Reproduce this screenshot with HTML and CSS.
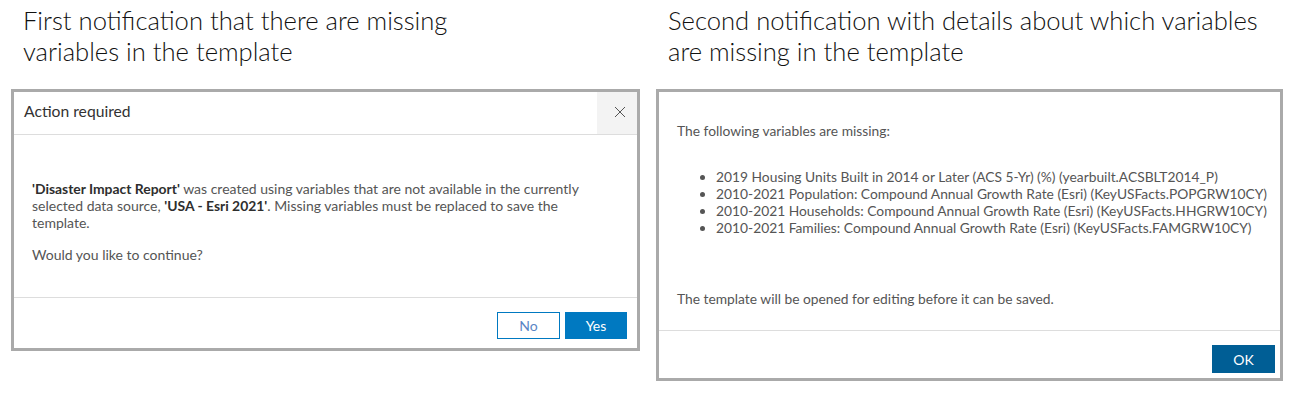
FILE: index.html
```html
<!DOCTYPE html>
<html>
<head>
<meta charset="utf-8">
<link rel="stylesheet" href="styles.css">
</head>
<body>
<div class="page">
  <section class="col col-left">
    <h2 class="heading">First notification that there are missing<br>variables in the template</h2>
    <div class="dialog dialog-left">
      <div class="dlg-header">
        <div class="dlg-title">Action required</div>
        <button class="close" aria-label="Close">
          <svg width="12" height="12" viewBox="0 0 12 12"><path d="M1 1 L11 11 M11 1 L1 11" stroke="#555555" stroke-width="1" fill="none"/></svg>
        </button>
      </div>
      <div class="dlg-body body-left">
        <p class="p1"><b>'Disaster Impact Report'</b> was created using variables that are not available in the currently selected data source, <b>'USA - Esri 2021'</b>. Missing variables must be replaced to save the template.</p>
        <p class="p2">Would you like to continue?</p>
      </div>
      <div class="dlg-footer footer-left">
        <button class="btn btn-clear">No</button>
        <button class="btn btn-blue">Yes</button>
      </div>
    </div>
  </section>
  <section class="col col-right">
    <h2 class="heading">Second notification with details about which variables<br>are missing in the template</h2>
    <div class="dialog dialog-right">
      <div class="dlg-body body-right">
        <p class="r1">The following variables are missing:</p>
        <ul class="vars">
          <li>2019 Housing Units Built in 2014 or Later (ACS 5-Yr) (%) (yearbuilt.ACSBLT2014_P)</li>
          <li>2010-2021 Population: Compound Annual Growth Rate (Esri) (KeyUSFacts.POPGRW10CY)</li>
          <li>2010-2021 Households: Compound Annual Growth Rate (Esri) (KeyUSFacts.HHGRW10CY)</li>
          <li>2010-2021 Families: Compound Annual Growth Rate (Esri) (KeyUSFacts.FAMGRW10CY)</li>
        </ul>
        <p class="r2">The template will be opened for editing before it can be saved.</p>
      </div>
      <div class="dlg-footer footer-right">
        <button class="btn btn-dark">OK</button>
      </div>
    </div>
  </section>
</div>
</body>
</html>
```
FILE: styles.css
```css
html, body {
  margin: 0;
  padding: 0;
  background: #ffffff;
}
.page {
  display: flex;
  gap: 16px;
  padding-left: 11px;
  padding-top: 5px;
  font-family: Lato, "Noto Sans", sans-serif;
}
.col-left { width: 629px; }
.col-right { width: 627px; }
.heading {
  margin: 0 0 21px 12px;
  font-family: Lato, sans-serif;
  font-weight: 300;
  font-size: 25.6px;
  line-height: 31px;
  color: #111111;
  height: 63px;
  white-space: nowrap;
}
.dialog {
  border: 3px solid #aaaaaa;
  background: #fff;
  display: flex;
  flex-direction: column;
}
.dialog-left { height: 256px; }
.dialog-right { height: 286px; }
.dlg-header {
  display: flex;
  align-items: stretch;
  height: 42px;
  border-bottom: 1px solid #dddddd;
}
.dlg-title {
  flex: 1;
  padding-left: 10px;
  padding-bottom: 5px;
  display: flex;
  align-items: center;
  font-size: 15.7px;
  color: #323232;
}
.close {
  width: 40px;
  border: 0;
  padding: 0 0 2px 5px;
  margin: 0;
  background: #f3f3f3;
  display: flex;
  align-items: center;
  justify-content: center;
}
.dlg-body {
  flex: 1;
  min-height: 0;
  padding-left: 18px;
  padding-right: 18px;
  line-height: 17px;
  color: #555555;
}
.body-left { font-size: 14px; }
.body-right { font-size: 13.8px; padding-right: 4px; }
.dlg-body p { margin: 0; }
.dlg-body b { color: #2e2e2e; font-weight: 700; font-size: 13.9px; }
.body-left { padding-top: 45px; }
.body-left .p2 { margin-top: 15px; }
.body-right { padding-top: 30px; }
.vars {
  margin: 29px 0 0 0;
  padding-left: 39px;
}
.vars li { padding-left: 0; white-space: nowrap; }
.r2 { margin-top: 54px !important; }
.dlg-footer {
  flex: none;
  border-top: 1px solid #dddddd;
  display: flex;
  justify-content: flex-end;
  align-items: flex-start;
}
.footer-left {
  height: 51px;
  box-sizing: border-box;
  padding: 14px 10px 0 0;
  gap: 5px;
}
.footer-right {
  height: 48px;
  box-sizing: border-box;
  padding: 14px 5px 0 0;
}
.btn {
  font-family: Lato, sans-serif;
  font-size: 14px;
  height: 27px;
  width: 63px;
  padding: 0;
  margin: 0;
  border: 1px solid #0079c1;
  cursor: pointer;
}
.btn-clear { background: #fff; color: #5a86c5; }
.btn-blue { background: #0079c1; color: #fff; width: 62px; }
.btn-dark { background: #005e95; border-color: #005e95; color: #fff; height: 28px; }
```
